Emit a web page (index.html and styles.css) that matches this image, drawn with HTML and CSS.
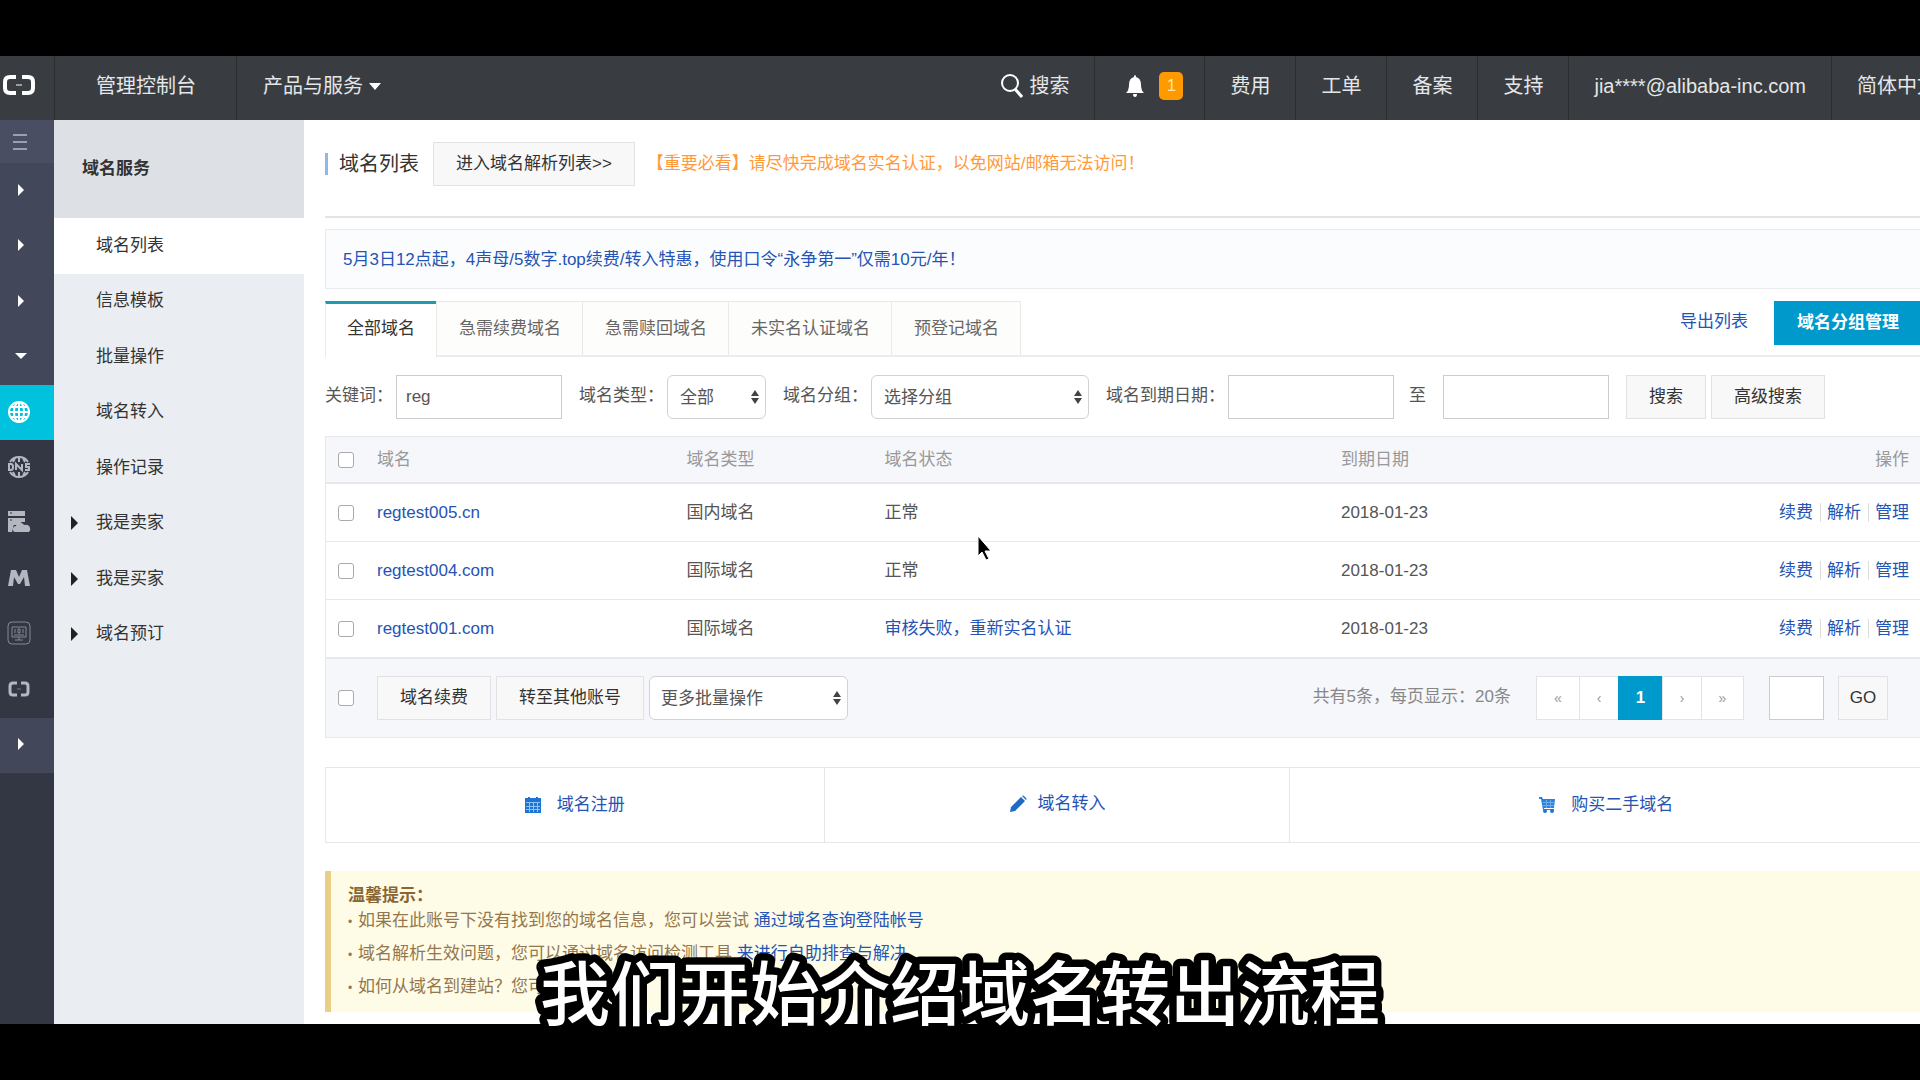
FILE: index.html
```html
<!DOCTYPE html>
<html lang="zh-CN">
<head>
<meta charset="utf-8">
<title>域名列表 - 管理控制台</title>
<link rel="stylesheet" href="styles.css">
</head>
<body>
<div class="screen">
  <div class="console">
    <header class="topbar">
      <a class="logo" href="#" aria-label="首页">
        <svg width="32" height="22" viewBox="0 0 32 22" fill="none" stroke="#fff" stroke-width="4"><path d="M13 3H7Q2 3 2 8v6q0 5 5 5h6M19 3h6q5 0 5 5v6q0 5-5 5h-6"/><path d="M13 11h6" stroke="#9a9da0" stroke-width="2"/></svg>
      </a>
      <a class="top-item wide" href="#">管理控制台</a>
      <a class="top-item plain" href="#">产品与服务 <span class="caret-down"></span></a>
      <nav class="top-right">
        <a class="top-item plain search" href="#">
          <svg width="24" height="24" viewBox="0 0 24 24" fill="none" stroke="#fff"><circle cx="11" cy="9" r="8" stroke-width="2"/><path d="M16 15l7 8" stroke-width="3"/></svg>
          搜索</a>
        <a class="top-item alarm" href="#" aria-label="消息">
          <svg width="18" height="24" viewBox="0 0 18 24" fill="#fff"><path d="M9 1q1 0 1 2 5 1 5 8 0 5 3 8H0q3-3 3-8 0-7 5-8 0-2 1-2zM7 20h4q0 3-2 3t-2-3z"/></svg>
          <span class="badge">1</span>
        </a>
        <a class="top-item" href="#">费用</a>
        <a class="top-item" href="#">工单</a>
        <a class="top-item" href="#">备案</a>
        <a class="top-item" href="#">支持</a>
        <a class="top-item" href="#">jia****@alibaba-inc.com</a>
        <a class="top-item" href="#">简体中文</a>
      </nav>
    </header>

    <div class="body">
      <nav class="rail" aria-label="产品">
        <button class="rail-toggle" aria-label="收起">
          <svg width="14" height="18" viewBox="0 0 14 18" stroke="#9b9fb0" stroke-width="2"><path d="M0 2h14M0 9h14M0 16h14"/></svg>
        </button>
        <ul class="rail-list">
          <li><span class="tri-right"></span></li>
          <li><span class="tri-right"></span></li>
          <li><span class="tri-right"></span></li>
          <li><span class="tri-down"></span></li>
          <li class="current"><svg width="24" height="24" viewBox="0 0 24 24" fill="none" stroke="#fff" stroke-width="2"><circle cx="12" cy="12" r="10"/><ellipse cx="12" cy="12" rx="5" ry="10"/><path d="M2 12h20M4 7h16M4 17h16M12 2v20"/></svg></li>
          <li class="dark"><svg width="24" height="24" viewBox="0 0 24 24" fill="none" stroke="#b4b7c0" stroke-width="2"><path d="M3 7q3-5 9-5t9 5M3 17q3 5 9 5t9-5M12 2v5M12 17v5M8 3L6 7M16 3l2 4M8 21l-2-4M16 21l2-4"/><path d="M2 9v6h2q2 0 2-3t-2-3zM9 15V9l6 6V9M23 9h-4v3h3v3h-4"/></svg></li>
          <li class="dark"><svg width="24" height="24" viewBox="0 0 24 24" fill="#b4b7c0"><path d="M1 1h17v5H1zM1 8h17v4h-3l-5 3H1zM1 14h6l-2 8H1z"/><path d="M8 22q-3-1-2-4 1-2 3-2 1-4 5-3 2 0 3 2 5-1 6 3 1 2-1 4z"/><path d="M3 3h2M3 10h2" stroke="#333744"/></svg></li>
          <li class="dark"><svg width="24" height="20" viewBox="0 0 24 20" fill="#b4b7c0"><path d="M1 18L4 2h5l3 7 3-7h5l3 16h-5L17 9l-4 7h-2L7 9 6 18z"/></svg></li>
          <li class="dark"><svg width="24" height="24" viewBox="0 0 24 24" fill="none" stroke="#858995"><rect x="1" y="1" width="22" height="22" rx="4"/><path d="M5 6h14v10H5zM8 8v4M11 8v4h2V8zM16 8v4M7 14h10M12 16v3M8 19h8"/></svg></li>
          <li class="dark"><svg width="24" height="18" viewBox="0 0 24 18" fill="none" stroke="#b4b7c0" stroke-width="3"><path d="M10 3H6Q3 3 3 6v6q0 3 3 3h4M14 3h4q3 0 3 3v6q0 3-3 3h-4"/><path d="M10 9h4" stroke-width="1" stroke="#777b87"/></svg></li>
          <li><span class="tri-right"></span></li>
        </ul>
      </nav>

      <aside class="sidebar">
        <h2 class="side-title">域名服务</h2>
        <ul class="side-list">
          <li class="active"><a href="#">域名列表</a></li>
          <li><a href="#">信息模板</a></li>
          <li><a href="#">批量操作</a></li>
          <li><a href="#">域名转入</a></li>
          <li><a href="#">操作记录</a></li>
          <li><span class="tri-side"></span><a href="#">我是卖家</a></li>
          <li><span class="tri-side"></span><a href="#">我是买家</a></li>
          <li><span class="tri-side"></span><a href="#">域名预订</a></li>
        </ul>
      </aside>

      <main class="main">
        <div class="page-head">
          <h1>域名列表</h1>
          <button class="btn">进入域名解析列表&gt;&gt;</button>
          <p class="warning">【重要必看】请尽快完成域名实名认证，以免网站/邮箱无法访问！</p>
        </div>

        <div class="notice"><a href="#">5月3日12点起，4声母/5数字.top续费/转入特惠，使用口令“永争第一”仅需10元/年！</a></div>

        <div class="tabs">
          <button class="tab selected">全部域名</button>
          <button class="tab">急需续费域名</button>
          <button class="tab">急需赎回域名</button>
          <button class="tab">未实名认证域名</button>
          <button class="tab">预登记域名</button>
          <div class="tab-tools">
            <a href="#">导出列表</a>
            <button class="btn primary">域名分组管理</button>
          </div>
        </div>

        <form class="filters">
          <div class="field"><label for="kw">关键词：</label><input id="kw" class="text" type="text" value="reg"></div>
          <div class="field"><label for="type">域名类型：</label>
            <span class="select narrow"><select id="type"><option>全部</option></select><svg width="8" height="14" viewBox="0 0 8 14"><path d="M4 0l4 6H0zM4 14l4-6H0z"/></svg></span></div>
          <div class="field"><label for="group">域名分组：</label>
            <span class="select medium"><select id="group"><option>选择分组</option></select><svg width="8" height="14" viewBox="0 0 8 14"><path d="M4 0l4 6H0zM4 14l4-6H0z"/></svg></span></div>
          <div class="field"><label for="from">域名到期日期：</label><input id="from" class="text" type="text"></div>
          <div class="field to"><label for="until">至</label><input id="until" class="text" type="text"></div>
          <div class="buttons">
            <button class="btn" type="button">搜索</button>
            <button class="btn" type="button">高级搜索</button>
          </div>
        </form>

        <table class="domains">
          <colgroup><col class="c-check"><col class="c-name"><col class="c-type"><col class="c-state"><col class="c-date"><col class="c-ops"></colgroup>
          <thead>
            <tr><th><input type="checkbox" aria-label="全选"></th><th>域名</th><th>域名类型</th><th>域名状态</th><th>到期日期</th><th class="ops">操作</th></tr>
          </thead>
          <tbody>
            <tr><td><input type="checkbox" aria-label="regtest005.cn"></td><td><a href="#">regtest005.cn</a></td><td>国内域名</td><td>正常</td><td>2018-01-23</td><td class="ops"><a href="#">续费</a><a href="#">解析</a><a href="#">管理</a></td></tr>
            <tr><td><input type="checkbox" aria-label="regtest004.com"></td><td><a href="#">regtest004.com</a></td><td>国际域名</td><td>正常</td><td>2018-01-23</td><td class="ops"><a href="#">续费</a><a href="#">解析</a><a href="#">管理</a></td></tr>
            <tr><td><input type="checkbox" aria-label="regtest001.com"></td><td><a href="#">regtest001.com</a></td><td>国际域名</td><td><a href="#">审核失败，重新实名认证</a></td><td>2018-01-23</td><td class="ops"><a href="#">续费</a><a href="#">解析</a><a href="#">管理</a></td></tr>
          </tbody>
        </table>
        <div class="table-foot">
          <input type="checkbox" aria-label="全选">
          <div class="batch">
            <button class="btn">域名续费</button>
            <button class="btn">转至其他账号</button>
            <span class="select wide"><select aria-label="更多批量操作"><option>更多批量操作</option></select><svg width="8" height="14" viewBox="0 0 8 14"><path d="M4 0l4 6H0zM4 14l4-6H0z"/></svg></span>
          </div>
          <span class="total">共有5条，每页显示：20条</span>
          <div class="pager">
            <button>«</button><button>‹</button><button class="on">1</button><button>›</button><button>»</button>
          </div>
          <input class="text page-no" type="text" aria-label="页码">
          <button class="btn go">GO</button>
        </div>

        <div class="shortcuts">
          <a href="#"><svg width="16" height="16" viewBox="0 0 16 16"><path fill="#1c74d4" d="M0 1h3V0h2v1h6V0h2v1h3v15H0z"/><path stroke="#8fc4f4" d="M1 5.500h14M1 9.500h14M1 12.500h14M4.500 5v10M8.500 5v10M12.500 5v10"/></svg>域名注册</a>
          <a class="tight" href="#"><svg width="18" height="18" viewBox="0 0 18 18" fill="#1c6cc4"><path d="M1 17l1-5L12 2l4 4L6 16zM13 1q1-1 2 0l2 2q1 1 0 2z"/></svg>域名转入</a>
          <a href="#"><svg width="16" height="16" viewBox="0 0 16 16"><path fill="#2f80dc" d="M0 0h3l1 2h12l-1 9H5v1h10v1H4L2 2H0z"/><circle cx="6" cy="14" r="2" fill="#1c74d4"/><circle cx="13" cy="14" r="2" fill="#1c74d4"/><path stroke="#6aaeee" d="M4 5.500h11M4 8.500h11M7.500 3v8M11.500 3v8"/></svg>购买二手域名</a>
        </div>

        <section class="tips">
          <h3>温馨提示：</h3>
          <ul>
            <li>如果在此账号下没有找到您的域名信息，您可以尝试 <a href="#">通过域名查询登陆帐号</a></li>
            <li>域名解析生效问题，您可以通过域名访问检测工具 <a href="#">来进行自助排查与解决</a></li>
            <li>如何从域名到建站？您可以</li>
          </ul>
        </section>
      </main>
    </div>
  </div>
</div>
<svg class="cursor" width="18" height="28" viewBox="0 0 18 28"><path d="M2 1v20l4-4 4 8 3-1-4-8h6z" fill="#000" stroke="#fff"/></svg>
<svg class="caption" width="100%" height="100"><text x="50%" y="76">我们开始介绍域名转出流程</text></svg>
</body>
</html>
```
FILE: styles.css
```css
* { box-sizing: border-box; margin: 0; padding: 0; }

body {
  position: relative;
  display: flex;
  flex-direction: column;
  min-height: 100vh;
  padding: 56px 0;
  overflow-x: hidden;
  background: #000;
  color: #555;
  font: 17px/24px "Liberation Sans", "Noto Sans CJK SC", sans-serif;
}

a { color: #2554b5; text-decoration: none; }
ul { list-style: none; }
button, input, select { font: inherit; color: inherit; }
svg { flex: none; }

.screen { display: flex; flex: 1; overflow: hidden; background: #fff; }
/* the console is slightly wider than the window and runs off its right edge */
.console { display: flex; flex: none; flex-direction: column; width: calc(100% + 42px); }

/* top bar */
.topbar { display: flex; height: 64px; background: #393d41; font-size: 20px; }
.logo { display: flex; align-items: center; width: 54px; padding: 0 0 6px 3px; }
.top-item {
  display: flex;
  align-items: center;
  padding: 0 25px 4px;
  border-left: 1px solid #2a2d30;
  color: #e4e6e8;
  white-space: nowrap;
}
.top-item.wide { padding-left: 41px; padding-right: 40px; border-right: 1px solid #2a2d30; }
.top-item.plain { border-left: 0; padding-left: 26px; }
.top-right { display: flex; margin-left: auto; }
.search { gap: 6px; }
.alarm { gap: 15px; padding: 0 21px 4px 31px; }
.badge {
  width: 24px;
  height: 28px;
  border-radius: 5px;
  background: #ff9900;
  color: #ffe3a8;
  font-size: 17px;
  line-height: 28px;
  text-align: center;
}
.caret-down { margin-left: 6px; border: 6px solid transparent; border-top: 7px solid #fff; border-bottom: 0; }

.body { display: flex; flex: 1; }

/* icon rail */
.rail { width: 54px; background: #333744; }
.rail-toggle {
  display: flex;
  align-items: center;
  width: 100%;
  height: 43px;
  padding-left: 13px;
  border: 0;
  background: #4a4e63;
}
.rail-list { display: grid; grid-auto-rows: 1fr; height: 610px; }
.rail-list li { display: flex; align-items: center; justify-content: center; padding: 0 16px 2px 0; background: #42475a; }
.rail-list .dark { background: #333744; }
.rail-list .current { background: #00c1de; }
.tri-right { margin-left: 4px; border: 6px solid transparent; border-left: 6px solid #fff; border-right: 0; }
.tri-down { margin-left: 4px; border: 6px solid transparent; border-top: 6px solid #fff; border-bottom: 0; }

/* sidebar */
.sidebar { width: 250px; background: #eaedf1; color: #333; }
.side-title { height: 98px; padding-left: 28px; background: #dde1e6; font-size: 17px; line-height: 98px; }
.side-list { display: grid; grid-auto-rows: 1fr; height: 444px; }
.side-list li { display: flex; align-items: center; padding-left: 42px; }
.side-list a { color: #333; }
.side-list .active { background: #fff; }
.tri-side { margin-left: -25px; margin-right: 18px; border: 7px solid transparent; border-left: 7px solid #222; border-right: 0; }

/* content */
.main { flex: 1; min-width: 0; padding: 0 40px 10px 21px; }

.page-head { display: flex; align-items: center; height: 98px; padding-bottom: 8px; border-bottom: 2px solid #e3e4e5; }
.page-head h1 {
  margin-right: 14px;
  padding-left: 11px;
  border-left: 3px solid #8db8ea;
  color: #333;
  font-size: 20px;
  font-weight: 400;
  line-height: 22px;
}
.warning { margin-left: 12px; color: #ff9a3c; }

.btn {
  height: 44px;
  padding: 0 22px;
  border: 1px solid #e2e2e2;
  background: #f8f8f9;
  color: #333;
  white-space: nowrap;
}
.btn.primary { border-color: #0099cc; background: #0099cc; color: #fff; font-weight: 700; }

.notice {
  margin-top: 11px;
  padding: 19px 17px 17px;
  border: 1px solid #e9ebef;
  background: #fbfcfe;
  line-height: 22px;
}

.tabs { display: flex; margin-top: 12px; border-bottom: 2px solid #ececef; }
.tab {
  height: 54px;
  margin-left: -1px;
  padding: 0 21px 0 22px;
  border: 1px solid #e9e9e9;
  border-bottom: 0;
  background: #fdfdfc;
  color: #666;
}
.tab.selected { height: 56px; margin: 0 0 -2px; padding: 0 21px 4px; border-top: 3px solid #1f9ab0; background: #fff; color: #333; }
.tab-tools { display: flex; gap: 26px; margin-left: auto; line-height: 42px; }

.filters { display: flex; gap: 17px; padding: 18px 0 17px; }
.field { display: flex; align-items: center; gap: 3px; }
.field.to { gap: 17px; margin-left: -2px; }
.field label { padding-bottom: 3px; white-space: nowrap; }
.buttons { display: flex; gap: 5px; }
.text { width: 166px; height: 44px; padding: 0 9px; border: 1px solid #ccc; background: #fff; }
.select { position: relative; display: block; }
.select select {
  width: 100%;
  height: 44px;
  padding: 2px 12px 0;
  border: 1px solid #d2d2d2;
  border-radius: 6px;
  appearance: none;
  background: #fff;
}
.select svg { position: absolute; top: 15px; right: 7px; fill: #444; pointer-events: none; }
.narrow { width: 99px; }
.medium { width: 218px; }
.wide.select { width: 199px; }

input[type="checkbox"] {
  display: block;
  width: 16px;
  height: 16px;
  border: 1px solid #aaa;
  border-radius: 3px;
  appearance: none;
  background: #fff;
}

.domains { width: 100%; table-layout: fixed; border: 1px solid #e6e8ec; border-width: 1px 0 0 1px; border-spacing: 0; }
.c-check { width: 51px; }
.c-name { width: 19.4%; }
.c-type { width: 12.4%; }
.c-state { width: 28.6%; }
.domains th, .domains td { height: 58px; border-bottom: 1px solid #e6e8ec; text-align: left; }
.domains th { height: 47px; border-bottom-width: 2px; background: #f6f7fb; color: #999; font-weight: 400; }
.domains th:first-child, .domains td:first-child { padding-left: 12px; }
.domains .ops { padding-right: 13px; text-align: right; }
.ops a + a { margin-left: 7px; padding-left: 6px; border-left: 1px solid #ddd; }

.table-foot {
  display: flex;
  align-items: center;
  height: 80px;
  padding: 0 34px 0 12px;
  border: 1px solid #e6e8ec;
  border-width: 1px 0 1px 1px;
  background: #f6f7fb;
}
.batch { display: flex; gap: 5px; margin: 0 auto 0 23px; }
.batch select { padding-left: 11px; }
.total { margin-right: 25px; padding-bottom: 3px; color: #888; }
.pager { display: flex; margin-right: 25px; }
.pager button { width: 39px; height: 44px; border: 1px solid #e2e3e6; border-right: 0; background: #fff; color: #999; font-size: 14px; }
.pager button:first-child { width: 43px; }
.pager button:last-child { width: 43px; border-right: 1px solid #e2e3e6; }
.pager .on { width: 44px; border-color: #0099cc; background: #0099cc; color: #fff; font-size: 17px; font-weight: 700; }
.page-no { width: 55px; margin-right: 14px; }
.go { width: 50px; padding: 0; }

.shortcuts { display: grid; grid-template-columns: 498fr 466fr 633fr; margin-top: 29px; border: 1px solid #e6e6e6; border-right: 0; }
.shortcuts a { display: flex; align-items: center; justify-content: center; gap: 16px; height: 74px; }
.shortcuts .tight { gap: 11px; padding-bottom: 2px; }
.shortcuts a + a { border-left: 1px solid #e6e6e6; }

.tips { margin-top: 28px; padding: 13px 17px 8px; border-left: 6px solid #e9cf85; background: #fefce6; color: #94774f; }
.tips h3 { color: #8a6633; font-size: 17px; line-height: 24px; }
.tips li { line-height: 32px; }
.tips ul { margin-top: -3px; }
.tips li::before { content: "•"; display: inline-block; width: 10px; font-size: 12px; }

/* overlays */
.cursor { position: absolute; left: 976px; top: 535px; }
.caption { position: absolute; bottom: 36px; left: 0; }
.caption text {
  fill: #fff;
  stroke: #000;
  stroke-width: 15px;
  stroke-linejoin: round;
  paint-order: stroke fill;
  font: 500 70px "Noto Sans CJK SC", sans-serif;
  text-anchor: middle;
}
```
